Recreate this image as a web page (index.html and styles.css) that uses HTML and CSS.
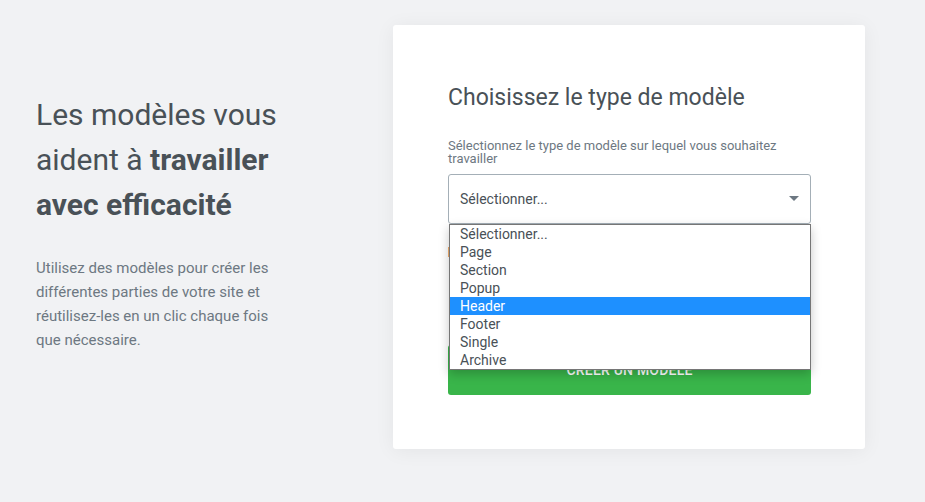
FILE: index.html
```html
<!DOCTYPE html>
<html lang="fr">
<head>
<meta charset="utf-8">
<link rel="stylesheet" href="styles.css">
</head>
<body>
<div class="page">
  <section class="intro">
    <h1 class="intro-title">Les modèles vous aident à <b>travailler avec efficacité</b></h1>
    <p class="intro-text">Utilisez des modèles pour créer les différentes parties de votre site et réutilisez-les en un clic chaque fois que nécessaire.</p>
  </section>
  <section class="card">
    <h2 class="card-title">Choisissez le type de modèle</h2>
    <label class="field-label">Sélectionnez le type de modèle sur lequel vous souhaitez travailler</label>
    <div class="select-wrap">
      <div class="select">
        <span>Sélectionner...</span>
        <svg class="caret" width="10" height="6" viewBox="0 0 10 6"><path d="M0 0h10L5 5z" fill="#6d7882"/></svg>
      </div>
      <ul class="options">
        <li>Sélectionner...</li>
        <li>Page</li>
        <li>Section</li>
        <li>Popup</li>
        <li class="active">Header</li>
        <li>Footer</li>
        <li>Single</li>
        <li>Archive</li>
      </ul>
    </div>
    <div class="hidden-field"><span class="warn"></span></div>
    <button class="submit">Créer un modèle</button>
  </section>
</div>
</body>
</html>
```

FILE: styles.css
```css
html, body {
  margin: 0;
  padding: 0;
  background: #f1f2f4;
  font-family: Roboto, "Liberation Sans", sans-serif;
}
.page {
  display: flex;
  align-items: flex-start;
  padding: 25px 60px 0 36px;
  height: 502px;
  box-sizing: border-box;
  justify-content: space-between;
}
.intro {
  width: 255px;
  margin-top: 67px;
}
.intro-title {
  margin: 0;
  font-size: 30px;
  line-height: 45px;
  font-weight: 400;
  color: #495157;
}
.intro-title b { font-weight: 700; }
.intro-text {
  margin: 29px 0 0;
  font-size: 15px;
  line-height: 24px;
  color: #6d7882;
}
.card {
  width: 472px;
  height: 424px;
  box-sizing: border-box;
  background: #fff;
  border-radius: 3px;
  box-shadow: 0 2px 20px rgba(0,0,0,0.06);
  padding: 60px 54px 0 55px;
}
.card-title {
  margin: 0;
  font-size: 23px;
  font-weight: 400;
  line-height: 26px;
  color: #495157;
}
.field-label {
  display: block;
  margin-top: 28px;
  font-size: 13px;
  line-height: 13px;
  color: #6d7882;
}
.select-wrap {
  position: relative;
  margin-top: 9px;
}
.select {
  height: 50px;
  box-sizing: border-box;
  border: 1px solid #a4afb7;
  border-radius: 3px;
  display: flex;
  align-items: center;
  justify-content: space-between;
  padding: 0 10px 0 11px;
  font-size: 14px;
  color: #495157;
}
.caret { margin-right: 1px; }
.options {
  position: absolute;
  left: 1px;
  right: 0;
  top: 50px;
  margin: 0;
  padding: 0;
  list-style: none;
  background: #fff;
  border: 1px solid #767676;
  box-shadow: 0 4px 10px rgba(0,0,0,0.22);
  z-index: 2;
}
.options li {
  height: 18px;
  line-height: 18px;
  font-size: 14px;
  padding-left: 10px;
  color: #495157;
}
.options li.active {
  background: #1e90ff;
  color: #fff;
}
.hidden-field {
  height: 121px;
  box-sizing: border-box;
  padding-top: 23px;
}
.warn {
  display: block;
  width: 2px;
  height: 10px;
  background: #f0ad6e;
}
.submit {
  display: block;
  width: 100%;
  height: 50px;
  border: 0;
  border-radius: 3px;
  background: #39b54a;
  color: #fff;
  font-family: inherit;
  font-size: 14px;
  font-weight: 500;
  text-transform: uppercase;
  letter-spacing: 0.2px;
}
```
